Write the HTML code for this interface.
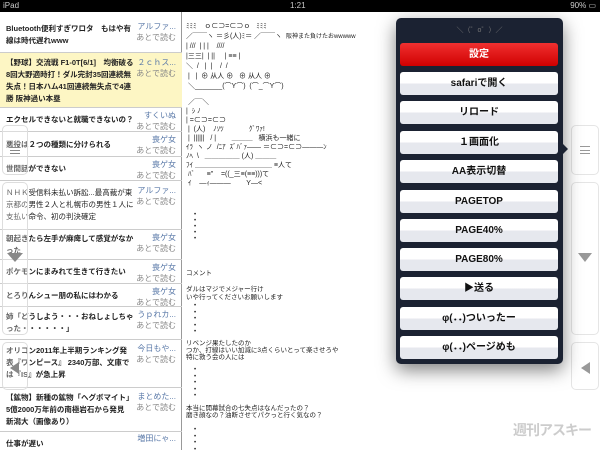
<!DOCTYPE html>
<html><head><meta charset="utf-8"><style>
*{margin:0;padding:0;box-sizing:border-box}
body{width:600px;height:450px;overflow:hidden;background:#fff;font-family:"Liberation Sans","Noto Sans CJK JP",sans-serif;position:relative}
.sb{position:absolute;left:0;top:0;width:600px;height:12px;background:#000;color:#ccc;font-size:8px;line-height:12px}
.list{position:absolute;left:0;top:12px;width:182px;height:438px;border-right:1px solid #999}
.row{position:absolute;left:0;width:182px;border-bottom:1px solid #ccc;font-size:7.5px;font-weight:bold;color:#222;line-height:12px}
.row .t{position:absolute;left:6px;top:0;width:128px}
.row .s{position:absolute;right:6px;top:0;text-align:right;font-weight:normal;font-size:8px;line-height:11px}
.s b{color:#5a79a8;font-weight:normal;display:block}
.s i{color:#888;font-style:normal;display:block}
.ol{position:absolute;border:1px solid #ddd;border-radius:5px;background:rgba(255,255,255,.3)}
.menu{position:absolute;left:396px;top:18px;width:167px;height:346px;background:#1b2232;border-radius:5px;box-shadow:0 6px 18px rgba(0,0,0,.5)}
.btn{position:absolute;left:4px;width:158px;height:23px;border-radius:3px;background:linear-gradient(#fff 0,#fff 48%,#e6e8ee 52%,#e6e8ee 100%);font-size:10px;font-weight:bold;text-align:center;line-height:23px;color:#111}
.red{background:linear-gradient(#f03030,#d00000);color:#fff}
.c{position:absolute;font-size:6px;color:#222;line-height:7px;white-space:pre}
.aa{font-size:7px;line-height:10px}
</style></head><body>
<div class="sb"><span style="margin-left:3px">iPad ︎</span><span style="position:absolute;left:290px">1:21</span><span style="position:absolute;right:4px">90% ▭</span></div>
<div class="list">
<div class="row" style="top:3px;height:38px"><div class="t" style="top:8px">Bluetooth便利すぎワロタ　もはや有線は時代遅れwww</div><div class="s" style="top:6px"><b>アルファ...</b><i>あとで読む</i></div></div>
<div class="row" style="top:41px;height:55px;background:#fdf6c4"><div class="t" style="top:4px">【野球】交流戦 F1-0T[6/1]　均衡破る8回大野適時打！ダル完封35回連続無失点！日本ハム41回連続無失点で4連勝 阪神過い本塁</div><div class="s" style="top:4px"><b>２ｃｈス...</b><i>あとで読む</i></div></div>
<div class="row" style="top:96px;height:24px"><div class="t" style="top:6px">エクセルできないと就職できないの？</div><div class="s" style="top:2px"><b>すくいぬ</b><i>あとで読む</i></div></div>
<div class="row" style="top:120px;height:25px"><div class="t" style="top:7px">悪役は２つの種類に分けられる</div><div class="s" style="top:2px"><b>喪ゲ女</b><i>あとで読む</i></div></div>
<div class="row" style="top:145px;height:24px"><div class="t" style="top:6px">世間話ができない</div><div class="s" style="top:2px"><b>喪ゲ女</b><i>あとで読む</i></div></div>
<div class="row" style="top:169px;height:49px"><div class="t" style="top:6px;font-weight:normal">ＮＨＫ受信料未払い訴訟...最高裁が東京都の男性２人と札幌市の男性１人に支払い命令、初の判決確定</div><div class="s" style="top:4px"><b>アルファ...</b><i>あとで読む</i></div></div>
<div class="row" style="top:218px;height:30px"><div class="t" style="top:3px">朝起きたら左手が麻痺して感覚がなかった</div><div class="s" style="top:2px"><b>喪ゲ女</b><i>あとで読む</i></div></div>
<div class="row" style="top:248px;height:24px"><div class="t" style="top:6px">ポケモンにまみれて生きて行きたい</div><div class="s" style="top:2px"><b>喪ゲ女</b><i>あとで読む</i></div></div>
<div class="row" style="top:272px;height:23px"><div class="t" style="top:6px">とろりんシュー朋の私にはわかる</div><div class="s" style="top:2px"><b>喪ゲ女</b><i>あとで読む</i></div></div>
<div class="row" style="top:295px;height:33px"><div class="t" style="top:4px">姉「どうしよう・・・おねしょしちゃった・・・・・・」</div><div class="s" style="top:2px"><b>うｐれカ...</b><i>あとで読む</i></div></div>
<div class="row" style="top:328px;height:48px"><div class="t" style="top:5px">オリコン2011年上半期ランキング発表『ワンピース』 2340万部、文庫では『IS』が急上昇</div><div class="s" style="top:3px"><b>今日もや...</b><i>あとで読む</i></div></div>
<div class="row" style="top:376px;height:44px"><div class="t" style="top:4px">【鉱物】新種の鉱物「ヘグボマイト」5億2000万年前の南極岩石から発見　新潟大（画像あり）</div><div class="s" style="top:3px"><b>まとめた...</b><i>あとで読む</i></div></div>
<div class="row" style="top:420px;height:30px;border:0"><div class="t" style="top:6px">仕事が遅い</div><div class="s" style="top:1px"><b>増田にゃ...</b></div></div>
</div>
<div class="ol" style="left:2px;top:125px;width:26px;height:50px"><div style="position:absolute;left:7px;top:21px;width:10px;height:7px;border-top:1px solid #888;border-bottom:1px solid #888"></div><div style="position:absolute;left:7px;top:24px;width:10px;border-top:1px solid #888"></div></div>
<div class="ol" style="left:2px;top:182px;width:26px;height:153px"><div style="position:absolute;left:4px;top:70px;border-left:8px solid transparent;border-right:8px solid transparent;border-top:9px solid #888"></div></div>
<div class="ol" style="left:2px;top:342px;width:26px;height:48px"><div style="position:absolute;left:7px;top:19px;border-top:6px solid transparent;border-bottom:6px solid transparent;border-right:9px solid #888"></div></div>

<div class="c aa" style="left:186px;top:22px">ﾐﾐﾐ    ｏ⊂⊃=⊂⊃ｏ   ﾐﾐﾐ
／￣￣ヽ ＝彡(人)ﾐ＝ ／￣￣ヽ  <span style="font-size:6px">阪神また負けたおwwwww</span>
| ///  | | |    ////
|三三|  | ||     | ≡≡ |
＼  /   |  |    /  /
 |   |  ⊕ 从人 ⊕   ⊕ 从人 ⊕
 ＼_______(⌒Y⌒)  (⌒_⌒Y⌒)</div>
<div class="c aa" style="left:186px;top:98px;line-height:9px"> ／￣＼
|  ｼ ﾉ
| =⊂⊃=⊂⊃
 |  (人)    ﾉｿﾂ             ｸﾞﾜｧ!
 |  ||||||   / |        ＿＿＿   横浜も一緒に
ｲﾗ  ヽ ノ  /ﾆｱ  ｽﾞﾊﾞｧ―― ＝⊂⊃=⊂⊃―――ﾝ
ﾉﾍ  \   ＿＿＿＿＿ (人) ＿＿＿
ﾌｲ ＿＿＿＿＿＿＿＿＿＿＿ ≡人て
 ﾊﾞ      ≡"    =((_三≡(≡≡)))て
 ｲ    ―ｨ―――        Y―&lt;</div>
<div class="c" style="left:194px;top:212px;line-height:6px">•
•
•
•
•</div>
<div class="c" style="left:186px;top:270px;font-size:6.5px;line-height:8px">コメント

ダルはマジでメジャー行け
いや行ってくださいお願いします</div>
<div class="c" style="left:194px;top:303px;line-height:6.5px">•
•
•
•
•</div>
<div class="c" style="left:186px;top:340px;font-size:6.5px;line-height:7px">リベンジ果たしたのか
つか、打線はいい加減に3点くらいとって楽させろや
特に救う会の人には</div>
<div class="c" style="left:194px;top:367px;line-height:6.5px">•
•
•
•
•</div>
<div class="c" style="left:186px;top:405px;font-size:6.5px;line-height:7px">本当に開幕試合の七失点はなんだったの？
磨き顔なの？油断させてパクっと行く気なの？</div>
<div class="c" style="left:194px;top:427px;line-height:6.5px">•
•
•
•</div>

<div class="ol" style="left:571px;top:125px;width:28px;height:50px;border-color:#e5e5e5"><div style="position:absolute;left:8px;top:20px;width:10px;height:8px;border-top:1px solid #999;border-bottom:1px solid #999"></div><div style="position:absolute;left:8px;top:24px;width:10px;border-top:1px solid #999"></div></div>
<div class="ol" style="left:571px;top:182px;width:28px;height:153px;border-color:#e5e5e5"><div style="position:absolute;left:6px;top:70px;border-left:7px solid transparent;border-right:7px solid transparent;border-top:9px solid #999"></div></div>
<div class="ol" style="left:571px;top:342px;width:28px;height:48px;border-color:#e5e5e5"><div style="position:absolute;left:9px;top:19px;border-top:6px solid transparent;border-bottom:6px solid transparent;border-right:9px solid #999"></div></div>

<div class="menu">
<div style="position:absolute;left:0;width:167px;top:7px;text-align:center;color:#777;font-size:7px">＼（゜o゜）／</div>
<div class="btn red" style="top:25px">設定</div>
<div class="btn" style="top:54px">safariで開く</div>
<div class="btn" style="top:83px">リロード</div>
<div class="btn" style="top:113px">１画面化</div>
<div class="btn" style="top:142px">AA表示切替</div>
<div class="btn" style="top:172px">PAGETOP</div>
<div class="btn" style="top:201px">PAGE40%</div>
<div class="btn" style="top:230px">PAGE80%</div>
<div class="btn" style="top:259px">▶送る</div>
<div class="btn" style="top:289px">φ(．．)ついったー</div>
<div class="btn" style="top:318px">φ(．．)ページめも</div>
<div style="position:absolute;left:166px;top:125px;border-top:6px solid transparent;border-bottom:6px solid transparent;border-left:6px solid #1b2232"></div>
</div>
<div style="position:absolute;left:513px;top:420px;font-size:14px;color:#ccc;font-weight:bold;letter-spacing:-1px">週刊アスキー</div>
</body></html>
